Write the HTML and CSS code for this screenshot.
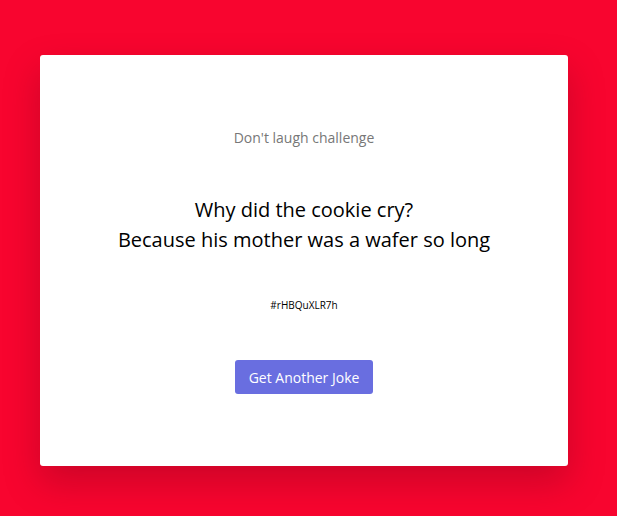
FILE: index.html
```html
<!DOCTYPE html>
<html lang="en">
<head>
<meta charset="utf-8">
<title>Dad Jokes</title>
<link rel="stylesheet" href="styles.css">
</head>
<body>
  <main class="page">
    <section class="card">
      <h3 class="title">Don't laugh challenge</h3>
      <p class="joke">Why did the cookie cry?<br>Because his mother was a wafer so long</p>
      <p class="tag">#rHBQuXLR7h</p>
      <button class="btn" type="button">Get Another Joke</button>
    </section>
  </main>
</body>
</html>
```

FILE: styles.css
```css
* { box-sizing: border-box; }
html, body { margin: 0; padding: 0; }
body {
  background: #f8052f;
  font-family: "Open Sans", "Noto Sans", sans-serif;
  width: 617px;
  height: 516px;
  overflow: hidden;
}
.page {
  padding-top: 55px;
  padding-left: 40px;
}
.card {
  width: 528px;
  height: 411px;
  background: #fff;
  border-radius: 3px;
  box-shadow: 0 16px 36px rgba(90, 0, 20, 0.28);
  padding: 73px 20px 72px;
  display: flex;
  flex-direction: column;
  align-items: center;
  text-align: center;
}
.title {
  margin: 0;
  font-size: 14px;
  line-height: 20px;
  font-weight: 400;
  color: #777;
}
.joke {
  margin: 47px 0 0;
  font-size: 20px;
  line-height: 30px;
  color: #000;
}
.tag {
  margin: 43px 0 0;
  font-size: 10px;
  line-height: 14px;
  color: #000;
}
.btn {
  margin-top: 48px;
  width: 138px;
  height: 34px;
  border: 0;
  border-radius: 3px;
  background: #696ee0;
  color: #fff;
  font-family: inherit;
  font-size: 14px;
  padding: 0;
}
```
